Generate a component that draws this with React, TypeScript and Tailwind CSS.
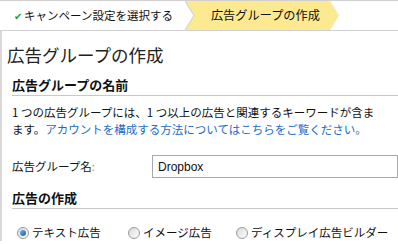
import React from "react";

const font = { fontFamily: '"Noto Sans CJK JP", "Noto Sans", sans-serif' };

function Radio({ checked, label }: { checked?: boolean; label: string }) {
  return (
    <label className="flex items-center gap-[3px]">
      <span className="relative flex h-[12px] w-[12px] items-center justify-center rounded-full border border-[#9a9a9a] bg-gradient-to-br from-[#d9d9d9] to-[#ffffff]">
        {checked && (
          <span className="h-[6px] w-[6px] rounded-full bg-gradient-to-br from-[#6fb3ea] to-[#1b5fa8]" />
        )}
      </span>
      <span>{label}</span>
    </label>
  );
}

export default function App() {
  return (
    <div className="h-[244px] w-[398px] overflow-hidden bg-white text-[11.5px] text-[#111]" style={font}>
      {/* Breadcrumb */}
      <div className="flex h-[31px] items-stretch border-y border-[#d0d0d0] bg-white">
        <div className="flex items-center pl-[14px] pr-[12px] text-[11.5px]">
          <span className="mr-[2px] text-[10px] text-[#2f9a2f]">✔</span>
          <span>キャンペーン設定を選択する</span>
        </div>
        <svg width="14" height="29" viewBox="0 0 14 29" className="shrink-0">
          <polygon points="0,0 14,0 14,29 0,29 9,14.5" fill="#fde98f" />
          <polyline points="0,0 9,14.5 0,29" fill="none" stroke="#d6d6d6" strokeWidth="1.2" />
        </svg>
        <div className="flex items-center bg-[#fde98f] pl-[12px] pr-[8px] text-[12.2px]">
          広告グループの作成
        </div>
        <svg width="12" height="29" viewBox="0 0 12 29" className="shrink-0">
          <polygon points="0,0 2,0 11,14.5 2,29 0,29" fill="#fde98f" />
          <polyline points="2,0 11,14.5 2,29" fill="none" stroke="#ededed" strokeWidth="1" />
        </svg>
      </div>

      {/* Body */}
      <div className="border-l-2 border-[#d9d9d9] pl-[5px]">
        <h1 className="pt-[12px] text-[17.5px] leading-[24px] text-[#222]">広告グループの作成</h1>

        <div className="pl-[5px]">
          <h2 className="mt-[9px] border-b border-[#c8c8c8] pb-[1px] text-[13px] font-bold leading-[18px]">
            広告グループの名前
          </h2>
          <p className="mt-[8px] whitespace-nowrap leading-[17px]">
            1 つの広告グループには、1 つ以上の広告と関連するキーワードが含ま
            <br />
            ます。<span className="text-[#1a6cc8]">アカウントを構成する方法についてはこちらをご覧ください。</span>
          </p>

          <div className="mt-[17px] flex items-center">
            <span className="w-[140px]">
              広告グループ名<span className="text-[#d08a2a]">:</span>
            </span>
            <div className="flex h-[23px] flex-1 items-center border border-[#a8a8a8] pl-[5px] text-[12px] text-[#111]" style={{ fontFamily: '"Liberation Sans", Arial, sans-serif' }}>
              Dropbox
            </div>
          </div>

          <h2 className="mt-[11px] border-b border-[#c8c8c8] pb-[1px] text-[13px] font-bold leading-[18px]">
            広告の作成
          </h2>

          <div className="mt-[15px] flex items-center pl-[5px]">
            <div className="w-[111px]">
              <Radio checked label="テキスト広告" />
            </div>
            <div className="w-[108px]">
              <Radio label="イメージ広告" />
            </div>
            <Radio label="ディスプレイ広告ビルダー" />
          </div>
        </div>
      </div>
    </div>
  );
}
